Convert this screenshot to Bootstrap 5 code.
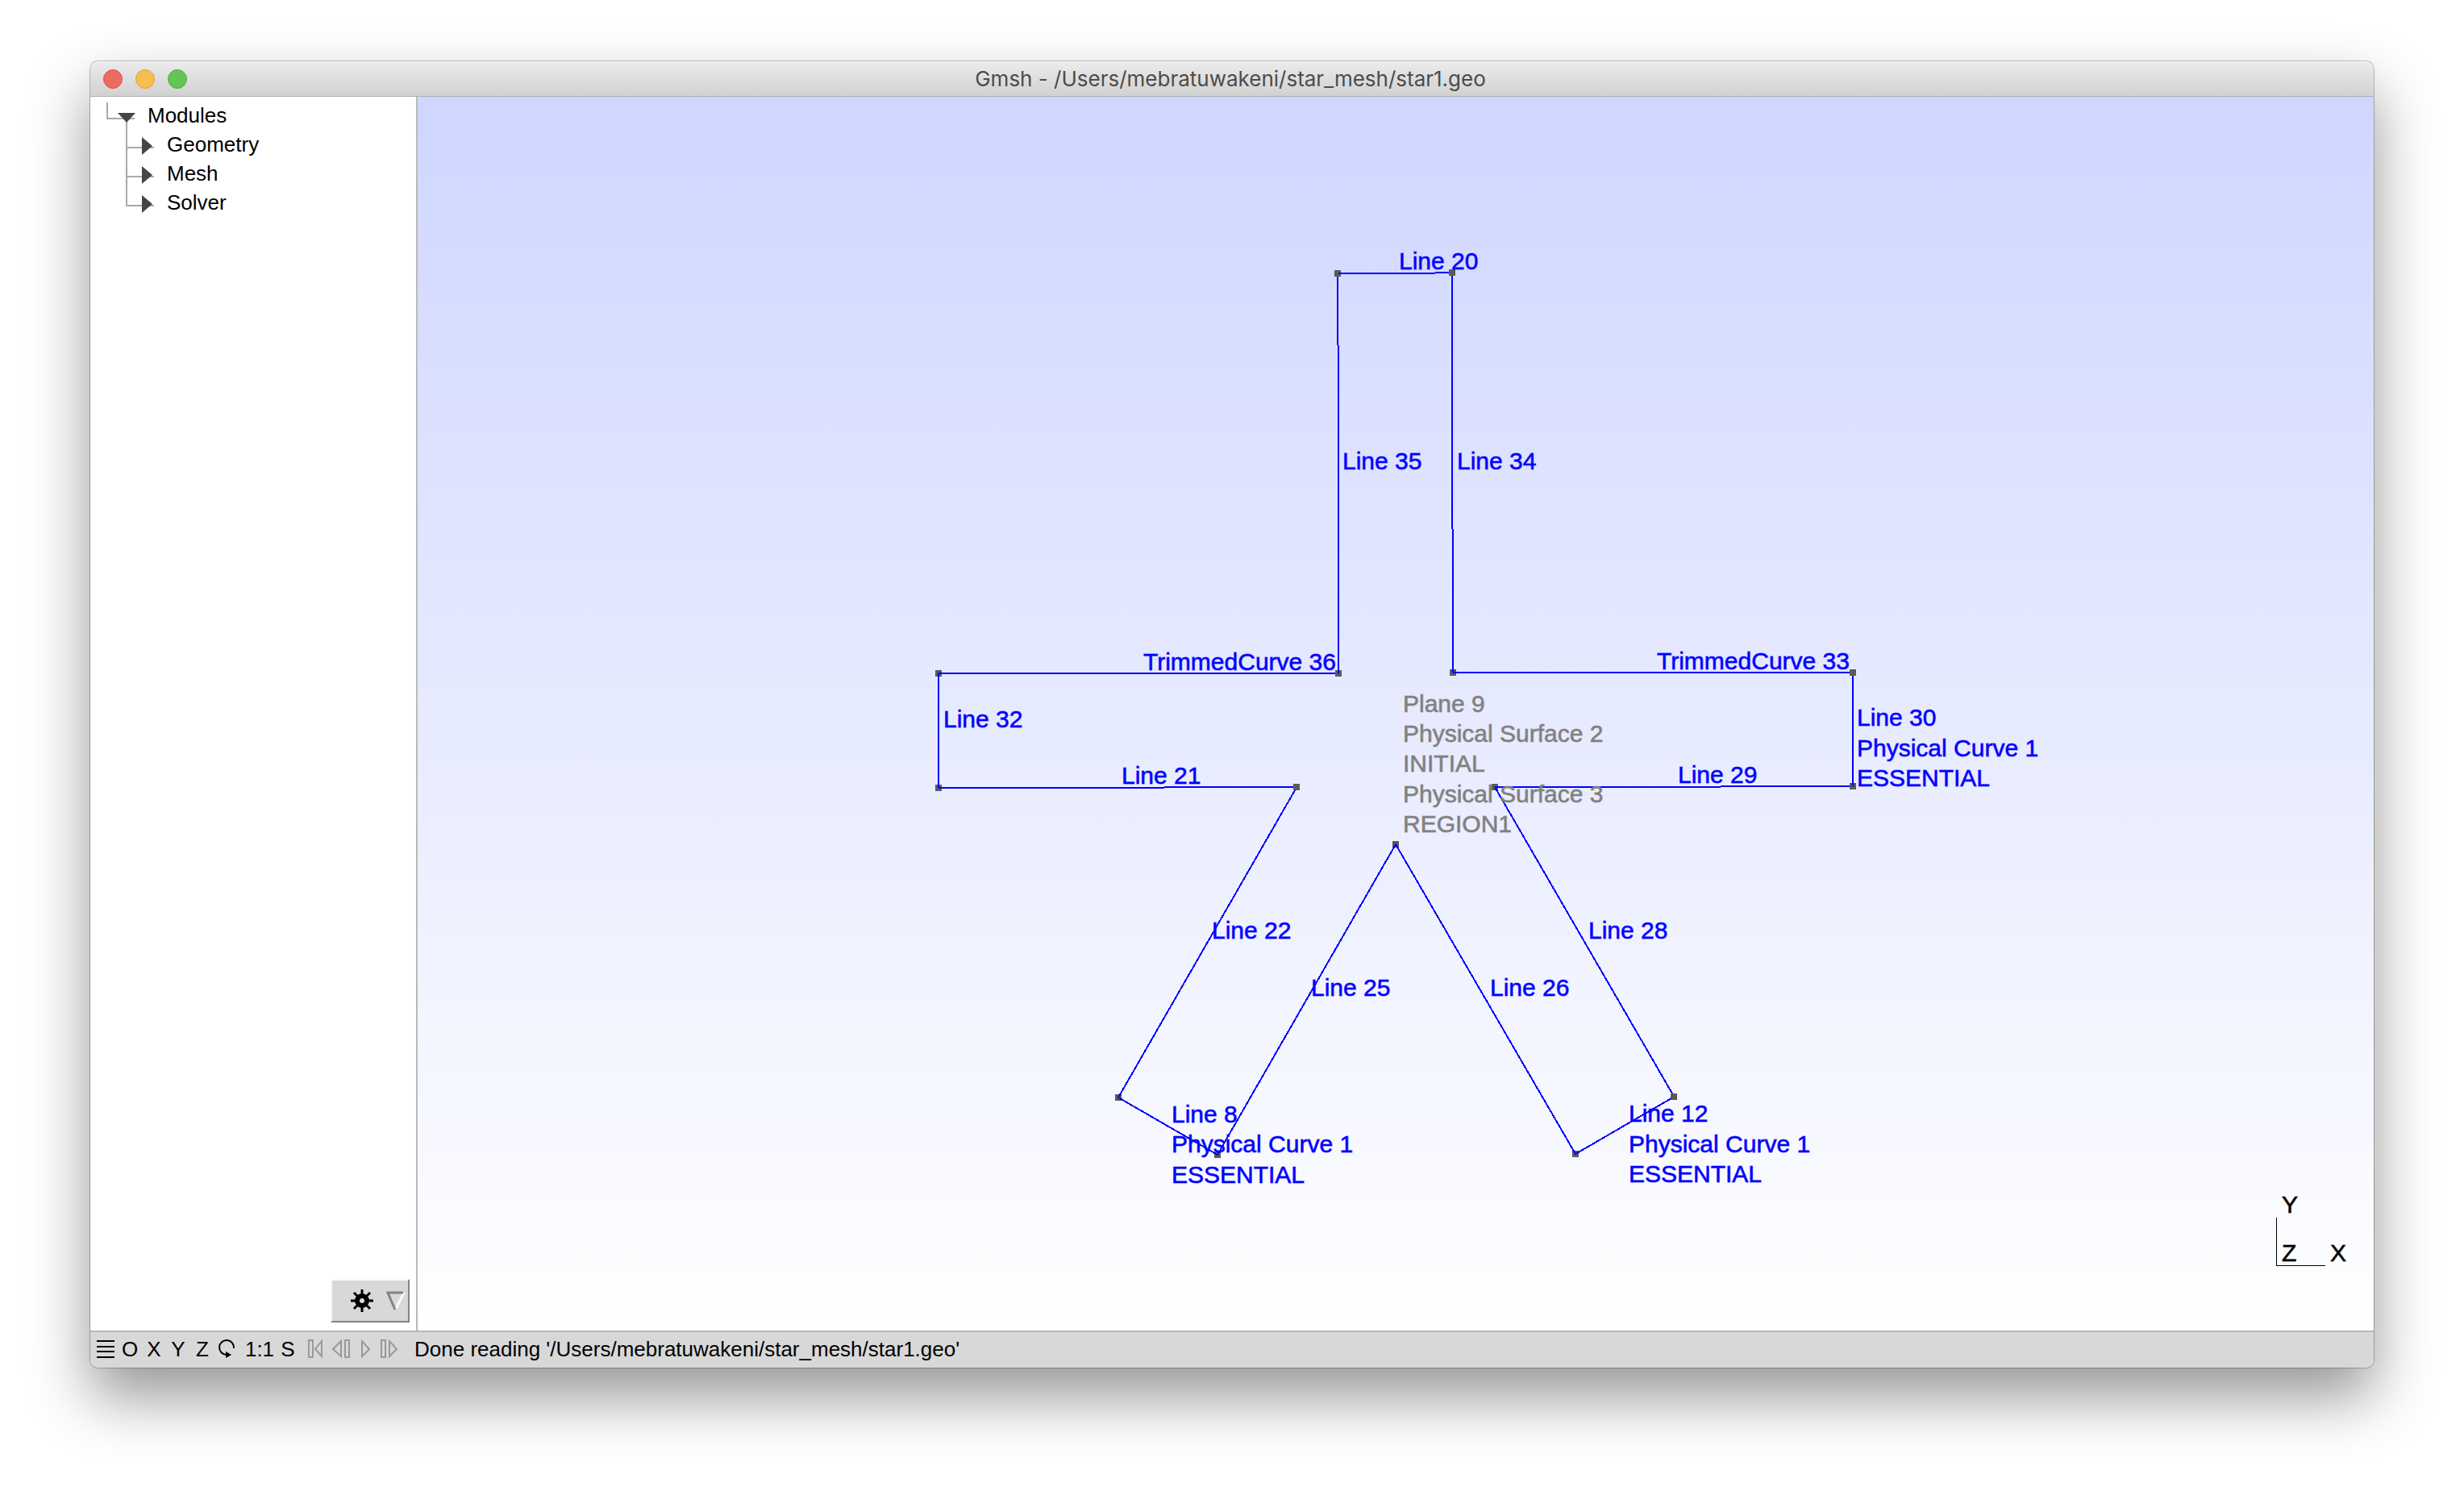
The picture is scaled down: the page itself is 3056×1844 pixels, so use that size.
<!DOCTYPE html>
<html lang="en">
<head>
<meta charset="utf-8">
<meta name="viewport" content="width=device-width, initial-scale=1">
<title>Gmsh - /Users/mebratuwakeni/star_mesh/star1.geo</title>
<link rel="stylesheet" href="https://cdn.jsdelivr.net/npm/bootstrap@5.3.0/dist/css/bootstrap.min.css">
<style>
  body { font-family: "Liberation Sans", Arial, sans-serif; font-size: 26px; line-height: 36px; color: #000; background: #fff; }
  .desk { padding: 76px 112px 148px; }
  .app-window { border-radius: 10px; background: #fff; box-shadow: 0 0 0 1px rgba(0,0,0,.24), 0 36px 76px rgba(0,0,0,.42); }
  .title-strip { height: 44px; padding: 0 20px 0 16px; background: linear-gradient(#ebebeb, #d1d1d1); border-top: 1px solid #f6f6f6; border-bottom: 1px solid #adadad; border-radius: 10px 10px 0 0; }
  .title-strip h1 { font: 400 26px/42px Inter, sans-serif; color: #4c4c4c; }
  .lights, .lights-spacer { width: 104px; }
  .light { width: 24px; height: 24px; border-radius: 50%; border: 1px solid; padding: 0; }
  .light-close { background: #ed6b60; border-color: #d9534b; }
  .light-min { background: #f6be4f; border-color: #dea03a; }
  .light-max { background: #62c655; border-color: #4fae41; }
  .side-panel { width: 406px; border-right: 2px solid #b9b9b9; padding-top: 5px; }
  .plain-btn { background: none; border: 0; padding: 0; color: inherit; line-height: inherit; }
  .gear-btn { width: 98px; height: 54px; margin: 0 8px 10px 0; background: #d8d8d8; border: 2px solid; border-color: #f8f8f8 #838383 #838383 #f8f8f8; padding: 0; }
  .view-area { background: linear-gradient(#cfd6ff, #fff); }
  .view-area svg text { font-size: 30px; }
  .geo-tags { stroke-width: 1px; stroke-opacity: .6; }
  .status-strip { height: 46px; border-top: 2px solid #b5b5b5; background: #d8d8d8; border-radius: 0 0 10px 10px; padding: 0 0 2px 6px; }
  .cell-a { width: 30px; }
  .cell-menu { width: 28px; }
  .cell-scale { width: 52px; }
  .cell-s { width: 18px; }
  .play-group { margin: 0 18px 0 10px; }
  svg { display: block; }
</style>
<script defer src="https://cdn.jsdelivr.net/npm/bootstrap@5.3.0/dist/js/bootstrap.bundle.min.js"></script>
</head>
<body>
<div class="desk vh-100 d-flex">
<main class="app-window flex-grow-1 d-flex flex-column">
  <header class="title-strip d-flex align-items-center">
    <div class="lights d-flex gap-3">
      <button class="light light-close" aria-label="Close"></button>
      <button class="light light-min" aria-label="Minimize"></button>
      <button class="light light-max" aria-label="Zoom"></button>
    </div>
    <h1 class="flex-grow-1 text-center m-0">Gmsh - /Users/mebratuwakeni/star_mesh/star1.geo</h1>
    <div class="lights-spacer"></div>
  </header>

  <div class="flex-grow-1 d-flex">
    <aside class="side-panel d-flex flex-column flex-shrink-0">
      <ul class="list-unstyled m-0">
        <li>
          <button class="plain-btn d-flex">
            <svg width="71" height="36" aria-hidden="true"><path d="M21 2V22H55M45 24V36" fill="none" stroke="#a9a9a9" stroke-width="2"/><path d="M34 15H56L45 27Z" fill="#454545"/></svg>Modules
          </button>
          <ul class="list-unstyled m-0">
            <li><button class="plain-btn d-flex"><svg width="95" height="36" aria-hidden="true"><path d="M45 0V36M45 22H79" fill="none" stroke="#a9a9a9" stroke-width="2"/><path d="M64 9V31L77 20Z" fill="#454545"/></svg>Geometry</button></li>
            <li><button class="plain-btn d-flex"><svg width="95" height="36" aria-hidden="true"><path d="M45 0V36M45 22H79" fill="none" stroke="#a9a9a9" stroke-width="2"/><path d="M64 9V31L77 20Z" fill="#454545"/></svg>Mesh</button></li>
            <li><button class="plain-btn d-flex"><svg width="95" height="36" aria-hidden="true"><path d="M45 0V22H79" fill="none" stroke="#a9a9a9" stroke-width="2"/><path d="M64 9V31L77 20Z" fill="#454545"/></svg>Solver</button></li>
          </ul>
        </li>
      </ul>
      <button class="gear-btn mt-auto align-self-end" aria-label="Options">
        <svg width="94" height="50" aria-hidden="true">
          <g transform="translate(37 25)">
            <g stroke="#000" stroke-width="3"><path d="M0-14V14M-14 0H14M-10-10L10 10M-10 10L10-10"/></g>
            <circle r="6" fill="#d8d8d8" stroke="#000" stroke-width="6"/>
          </g>
          <path d="M67 15H90L79 36Z" fill="#d8d8d8"/>
          <path d="M89 15L79 35" stroke="#fafafa" stroke-width="3"/>
          <path d="M88 15H69L78 36" fill="none" stroke="#838383" stroke-width="3"/>
        </svg>
      </button>
    </aside>

    <section class="view-area flex-grow-1 position-relative">
      <svg class="position-absolute top-0 start-0 w-100 h-100" viewBox="518 120 2426 1530" role="img" aria-label="Star geometry">
        <g fill="#5a5a5a" shape-rendering="crispEdges">
          <rect x="1655" y="335" width="8" height="8"/><rect x="1797" y="334" width="8" height="8"/>
          <rect x="1160" y="831" width="8" height="8"/><rect x="1656" y="831" width="8" height="8"/>
          <rect x="1798" y="830" width="8" height="8"/><rect x="2294" y="830" width="8" height="8"/>
          <rect x="1160" y="973" width="8" height="8"/><rect x="1604" y="972" width="8" height="8"/>
          <rect x="1850" y="972" width="8" height="8"/><rect x="2294" y="971" width="8" height="8"/>
          <rect x="1727" y="1043" width="8" height="8"/><rect x="1383" y="1357" width="8" height="8"/>
          <rect x="1506" y="1428" width="8" height="8"/><rect x="1950" y="1427" width="8" height="8"/>
          <rect x="2072" y="1356" width="8" height="8"/>
        </g>
        <g fill="none" stroke="#00f" stroke-width="2" shape-rendering="crispEdges">
          <path d="M1660 339H1780M1780 338H1797"/>
          <path d="M1659 343V428M1660 428V835"/>
          <path d="M1801 342V656M1802 656V834"/>
          <path d="M1164 835H1656M1164 835V977"/>
          <path d="M1164 977H1444M1444 976H1604"/>
          <path d="M1802 834H2294M2298 838V975"/>
          <path d="M1854 976H2134M2134 975H2294"/>
          <path d="M1606 980L1387 1361L1510 1432L1731 1047L1954 1431L2073 1362"/>
          <path d="M1854 976L2074 1356"/>
        </g>
        <g class="geo-tags" fill="#00f" stroke="#00f">
          <text x="1735" y="334">Line 20</text>
          <text x="1665" y="582">Line 35</text>
          <text x="1807" y="582">Line 34</text>
          <text x="1418" y="831">TrimmedCurve 36</text>
          <text x="2055" y="830">TrimmedCurve 33</text>
          <text x="1170" y="902">Line 32</text>
          <text x="1391" y="972">Line 21</text>
          <text x="2081" y="971">Line 29</text>
          <text x="2303" y="900">Line 30</text>
          <text x="2303" y="938">Physical Curve 1</text>
          <text x="2303" y="975">ESSENTIAL</text>
          <text x="1503" y="1164">Line 22</text>
          <text x="1626" y="1235">Line 25</text>
          <text x="1848" y="1235">Line 26</text>
          <text x="1970" y="1164">Line 28</text>
          <text x="1453" y="1392">Line 8</text>
          <text x="1453" y="1429">Physical Curve 1</text>
          <text x="1453" y="1467">ESSENTIAL</text>
          <text x="2020" y="1391">Line 12</text>
          <text x="2020" y="1429">Physical Curve 1</text>
          <text x="2020" y="1466">ESSENTIAL</text>
        </g>
        <g class="geo-tags" fill="#808080" stroke="#808080">
          <text x="1740" y="883">Plane 9</text>
          <text x="1740" y="920">Physical Surface 2</text>
          <text x="1740" y="957">INITIAL</text>
          <text x="1740" y="995">Physical Surface 3</text>
          <text x="1740" y="1032">REGION1</text>
        </g>
        <g fill="#000" shape-rendering="crispEdges">
          <rect x="2823" y="1510" width="1" height="60"/>
          <rect x="2823" y="1569" width="61" height="1"/>
        </g>
        <g class="geo-tags" fill="#000" stroke="#000">
          <text x="2830" y="1504">Y</text>
          <text x="2830" y="1564">Z</text>
          <text x="2890" y="1564">X</text>
        </g>
      </svg>
    </section>
  </div>

  <footer class="status-strip d-flex align-items-center">
    <button class="plain-btn cell-menu" aria-label="Menu"><svg width="28" height="28" aria-hidden="true"><path d="M2 4H24M2 11H24M2 17H24M2 24H24" stroke="#000" stroke-width="2"/></svg></button>
    <button class="plain-btn cell-a">O</button>
    <button class="plain-btn cell-a">X</button>
    <button class="plain-btn cell-a">Y</button>
    <button class="plain-btn cell-a">Z</button>
    <button class="plain-btn cell-a" aria-label="Rotate"><svg width="30" height="28" aria-hidden="true"><path d="M24 13A9 9 0 1 0 15 21" fill="none" stroke="#000" stroke-width="2"/><path d="M14 17L21 21L14 25Z"/></svg></button>
    <button class="plain-btn cell-scale">1:1</button>
    <button class="plain-btn cell-s">S</button>
    <div class="play-group d-flex">
      <button class="plain-btn cell-a" aria-label="Rewind"><svg width="30" height="28" aria-hidden="true"><path d="M7 3H12V24H7ZM23 4V23L15 14Z" fill="none" stroke="#999" stroke-width="2"/></svg></button>
      <button class="plain-btn cell-a" aria-label="Step back"><svg width="30" height="28" aria-hidden="true"><path d="M17 4V23L7 14ZM22 3H27V24H22Z" fill="none" stroke="#999" stroke-width="2"/></svg></button>
      <button class="plain-btn cell-a" aria-label="Play"><svg width="30" height="28" aria-hidden="true"><path d="M13 4V23L22 14Z" fill="none" stroke="#999" stroke-width="2"/></svg></button>
      <button class="plain-btn cell-a" aria-label="Step forward"><svg width="30" height="28" aria-hidden="true"><path d="M7 3H12V24H7ZM17 4V23L26 14Z" fill="none" stroke="#999" stroke-width="2"/></svg></button>
    </div>
    <div>Done reading '/Users/mebratuwakeni/star_mesh/star1.geo'</div>
  </footer>
</main>
</div>
</body>
</html>
